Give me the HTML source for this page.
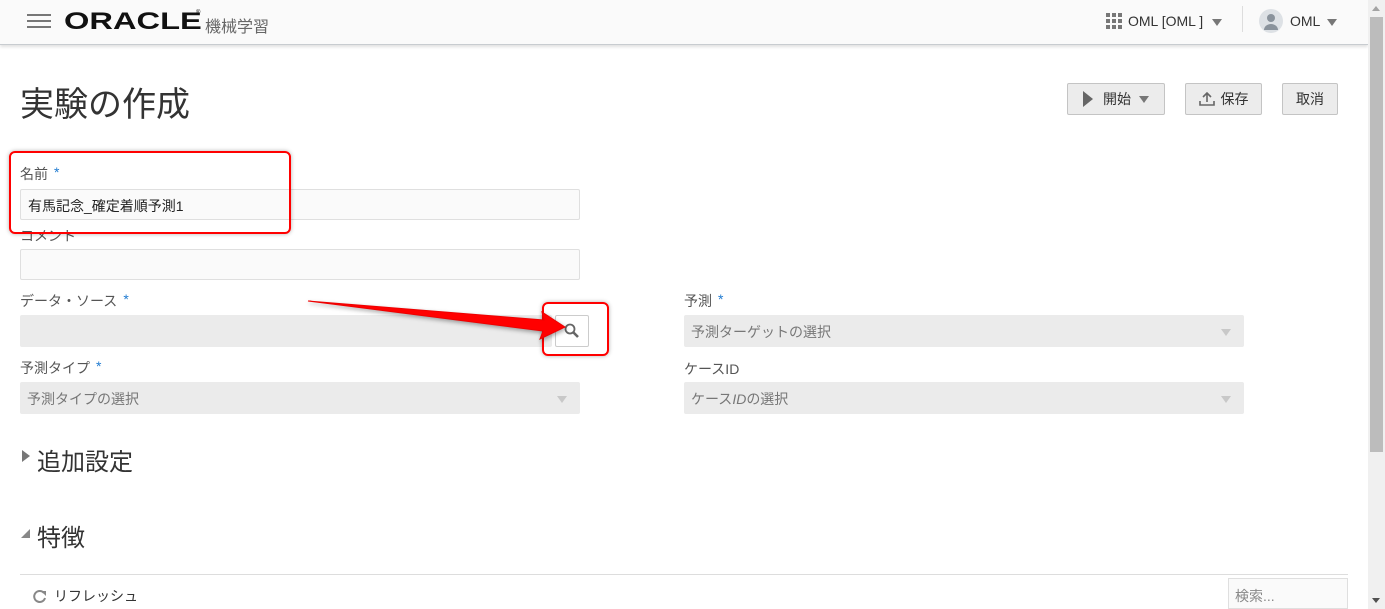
<!DOCTYPE html>
<html><head><meta charset="utf-8"><style>
*{box-sizing:border-box;margin:0;padding:0}
body{width:1385px;height:609px;overflow:hidden;background:#fff;font-family:"Liberation Sans","Noto Sans CJK JP",sans-serif;color:#333;position:relative}
.a{position:absolute}
.hdr{left:0;top:0;width:1368px;height:45px;background:#fafafa;border-bottom:1px solid #c8ccd0;box-shadow:0 2px 3px rgba(0,0,0,.12)}
.lbl{font-size:14px;color:#555}
.star{color:#1f7ad0;font-size:14px;margin-left:6px;vertical-align:top}
.inp{height:31px;border:1px solid #dfdfdf;background:#fafafa;border-radius:2px}
.dis{height:32px;background:#ebebeb;border-radius:2px;font-size:14px;color:#777;padding:7px 7px}
.tri{width:0;height:0;border-left:5px solid transparent;border-right:5px solid transparent;border-top:7px solid #c8c8c8}
.btn{height:32px;border:1px solid #c4c4c4;background:#ececec;border-radius:2px;font-size:14px;color:#333;display:flex;align-items:center;justify-content:center}
.red{border:2px solid #f00;border-radius:6px;box-shadow:0 0 4px rgba(0,0,0,.3)}
</style></head><body>
<div class="a hdr"></div>
<div class="a" style="left:27px;top:14px;width:24px;height:2px;background:#777"></div>
<div class="a" style="left:27px;top:20px;width:24px;height:2px;background:#777"></div>
<div class="a" style="left:27px;top:26px;width:24px;height:2px;background:#777"></div>
<div class="a" style="left:64px;top:8px;font-size:24px;font-weight:bold;letter-spacing:0px;color:#111;transform:scaleX(1.36);transform-origin:left;">ORACLE</div>
<div class="a" style="left:196px;top:10px;font-size:6px;color:#111">®</div>
<div class="a" style="left:205px;top:13px;font-size:16px;color:#666">機械学習</div>
<svg class="a" style="left:1106px;top:13px" width="16" height="16"><g fill="#777"><rect x="0" y="0" width="4" height="4"/><rect x="6" y="0" width="4" height="4"/><rect x="12" y="0" width="4" height="4"/><rect x="0" y="6" width="4" height="4"/><rect x="6" y="6" width="4" height="4"/><rect x="12" y="6" width="4" height="4"/><rect x="0" y="12" width="4" height="4"/><rect x="6" y="12" width="4" height="4"/><rect x="12" y="12" width="4" height="4"/></g></svg>
<div class="a" style="left:1128px;top:13px;font-size:14px;color:#333">OML [OML ]</div>
<div class="a tri" style="left:1212px;top:19px;border-top-color:#777"></div>
<div class="a" style="left:1242px;top:6px;width:1px;height:26px;background:#ddd"></div>
<svg class="a" style="left:1259px;top:9px" width="24" height="24"><circle cx="12" cy="12" r="12" fill="#dde1e5"/><circle cx="12" cy="9" r="4" fill="#8a939c"/><path d="M5 21a7 6 0 0 1 14 0z" fill="#8a939c"/></svg>
<div class="a" style="left:1290px;top:13px;font-size:14px;color:#333">OML</div>
<div class="a tri" style="left:1327px;top:19px;border-top-color:#777"></div>
<div class="a" style="left:1368px;top:0;width:17px;height:609px;background:#f0f0f0"></div>
<div class="a" style="left:1370px;top:17px;width:13px;height:435px;background:#bcbcbc"></div>
<div class="a" style="left:1372px;top:6px;width:0;height:0;border-left:4px solid transparent;border-right:4px solid transparent;border-bottom:5px solid #a3a3a3"></div>
<div class="a" style="left:1372px;top:598px;width:0;height:0;border-left:4px solid transparent;border-right:4px solid transparent;border-top:5px solid #505050"></div>

<div class="a" style="left:20px;top:77px;font-size:34px;color:#333">実験の作成</div>
<div class="a btn" style="left:1067px;top:83px;width:98px;"><span style="display:inline-block;border-top:8px solid transparent;border-bottom:8px solid transparent;border-left:10px solid #666;margin-right:10px"></span>開始<span class="tri" style="display:inline-block;margin-left:8px;border-top-color:#777"></span></div>
<div class="a btn" style="left:1185px;top:83px;width:77px;"><svg width="16" height="14" style="margin-right:6px"><path d="M8 1v9M4 5l4-4 4 4M1 9v4h14V9" stroke="#666" stroke-width="1.6" fill="none"/></svg>保存</div>
<div class="a btn" style="left:1282px;top:83px;width:56px;">取消</div>

<div class="a lbl" style="left:20px;top:164px">名前<span class="star">*</span></div>
<div class="a inp" style="left:20px;top:189px;width:560px;font-size:14px;color:#222;padding:6px 7px">有馬記念_確定着順予測1</div>
<div class="a lbl" style="left:20px;top:226px">コメント</div>
<div class="a inp" style="left:20px;top:249px;width:560px"></div>

<div class="a lbl" style="left:20px;top:291px">データ・ソース<span class="star">*</span></div>
<div class="a dis" style="left:20px;top:315px;width:532px"></div>
<div class="a" style="left:555px;top:315px;width:34px;height:32px;border:1px solid #ccc;background:#fff;border-radius:2px"><svg width="32" height="30"><circle cx="14" cy="13" r="4.5" stroke="#666" stroke-width="1.8" fill="none"/><path d="M17 16l5 5" stroke="#666" stroke-width="2.6"/></svg></div>
<div class="a lbl" style="left:20px;top:358px">予測タイプ<span class="star">*</span></div>
<div class="a dis" style="left:20px;top:382px;width:560px">予測タイプの選択</div>
<div class="a tri" style="left:557px;top:396px"></div>

<div class="a lbl" style="left:684px;top:291px">予測<span class="star">*</span></div>
<div class="a dis" style="left:684px;top:315px;width:560px">予測ターゲットの選択</div>
<div class="a tri" style="left:1221px;top:329px"></div>
<div class="a lbl" style="left:684px;top:359px">ケースID</div>
<div class="a dis" style="left:684px;top:382px;width:560px">ケース<i>ID</i>の選択</div>
<div class="a tri" style="left:1221px;top:396px"></div>

<div class="a" style="left:22px;top:450px;width:0;height:0;border-top:6px solid transparent;border-bottom:6px solid transparent;border-left:8px solid #777"></div>
<div class="a" style="left:37px;top:442px;font-size:24px;color:#333">追加設定</div>
<div class="a" style="left:21px;top:529px;width:0;height:0;border-left:9px solid transparent;border-bottom:9px solid #888"></div>
<div class="a" style="left:37px;top:518px;font-size:24px;color:#333">特徴</div>
<div class="a" style="left:20px;top:574px;width:1328px;height:1px;background:#ddd"></div>
<svg class="a" style="left:32px;top:588px" width="16" height="16"><path d="M12 5A5.5 5.5 0 1 0 13 10" stroke="#888" stroke-width="2" fill="none"/><path d="M9 3h5v5z" fill="#888"/></svg>
<div class="a" style="left:54px;top:586px;font-size:14px;color:#333">リフレッシュ</div>
<div class="a" style="left:1228px;top:578px;width:120px;height:31px;border:1px solid #dfdfdf;background:#fafafa;font-size:14px;color:#888;padding:7px 6px">検索...</div>

<div class="a red" style="left:9px;top:151px;width:282px;height:83px"></div>
<div class="a red" style="left:542px;top:302px;width:67px;height:54px"></div>
<svg class="a" style="left:300px;top:295px" width="280" height="50"><path d="M8 6 L244 25 L242 17 L265 32 L240 44 L243 36 Z" fill="#f00" stroke="#e00" stroke-width="1" style="filter:drop-shadow(1px 2px 2px rgba(0,0,0,.35))"/></svg>
</body></html>
